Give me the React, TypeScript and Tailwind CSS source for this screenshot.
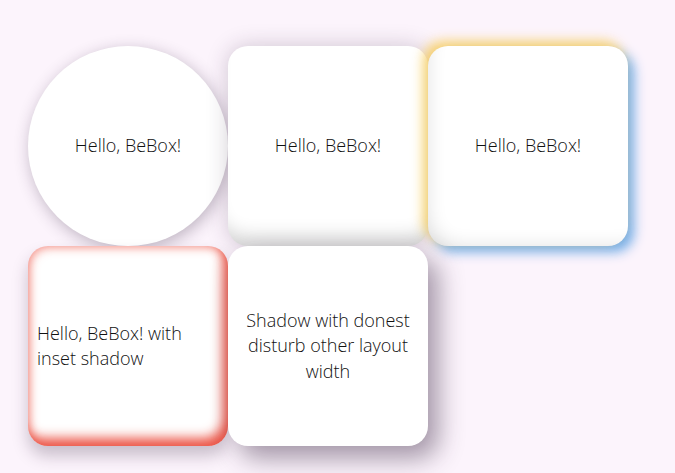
import React from "react";

const font = { fontFamily: '"Open Sans", "DejaVu Sans", sans-serif' };

const App: React.FC = () => {
    return (
        <div className="min-h-[473px] w-full bg-[#fcf4fc] text-[#111] font-light text-[18px] leading-[25.5px]" style={font}>
            <div className="grid grid-cols-[repeat(3,200px)] pl-[28px] pt-[46px]">
                {/* circle */}
                <div className="w-[200px] h-[200px] rounded-full bg-white flex items-center justify-center shadow-[2px_4px_16px_rgba(50,30,60,0.3)]">
                    Hello, BeBox!
                </div>

                {/* inset bottom shadow */}
                <div className="w-[200px] h-[200px] rounded-[20px] bg-white flex items-center justify-center shadow-[0_0_22px_rgba(50,30,60,0.22),inset_0_-24px_18px_-14px_rgba(0,0,0,0.16)]">
                    Hello, BeBox!
                </div>

                {/* coloured glow */}
                <div className="w-[200px] h-[200px] rounded-[20px] bg-white flex items-center justify-center shadow-[-5px_-5px_12px_rgba(248,205,90,0.85),6px_6px_12px_rgba(100,165,230,0.9),inset_14px_-14px_20px_-16px_rgba(0,0,0,0.14)]">
                    Hello, BeBox!
                </div>

                {/* inset red shadow */}
                <div className="w-[200px] h-[200px] rounded-[20px] bg-white flex items-center px-[9px] shadow-[inset_-5px_-8px_12px_rgba(235,80,65,0.95),inset_2px_2px_10px_rgba(240,90,75,0.55),0_10px_16px_rgba(50,30,60,0.25)]">
                    Hello, BeBox! with inset shadow
                </div>

                {/* big drop shadow */}
                <div className="w-[200px] h-[200px] rounded-[20px] bg-white flex items-center justify-center text-center px-[12px] shadow-[10px_12px_26px_rgba(50,30,60,0.45)]">
                    Shadow with donest disturb other layout width
                </div>
            </div>
        </div>
    );
};

export default App;
